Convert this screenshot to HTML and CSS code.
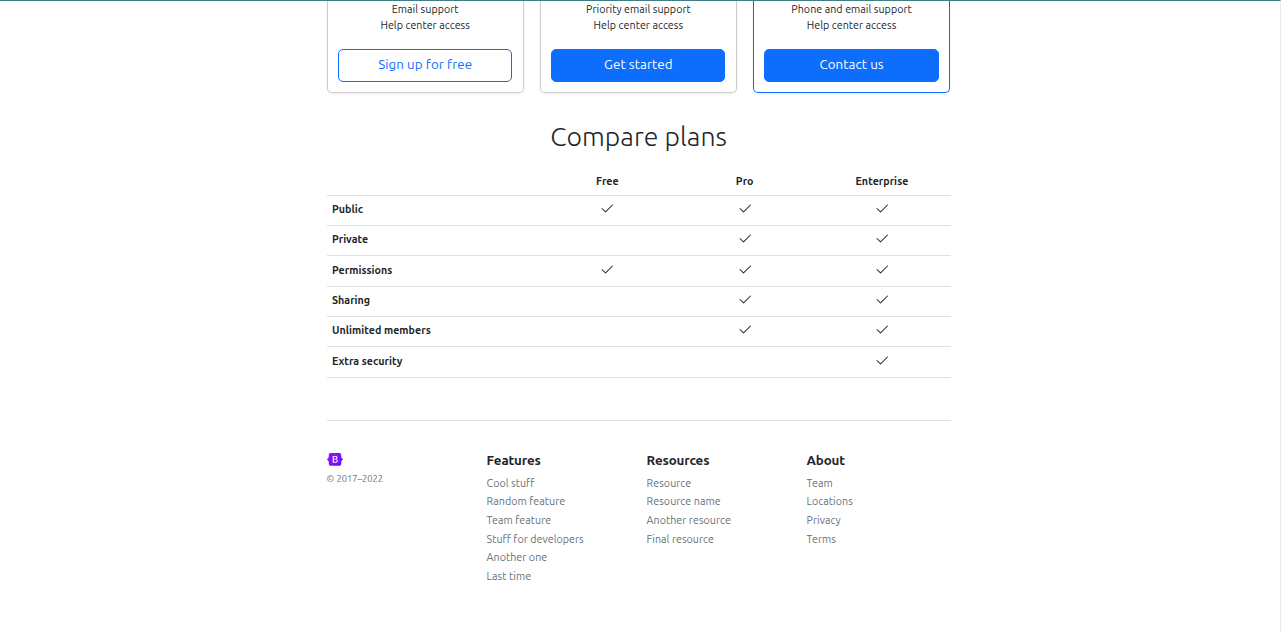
FILE: index.html
```html
<!DOCTYPE html>
<html lang="en">
<head>
<meta charset="utf-8">
<title>Pricing</title>
<link rel="stylesheet" href="styles.css">
</head>
<body>
<svg class="defs" aria-hidden="true">
  <symbol id="check" viewBox="0 0 16 16"><path d="M13.854 3.646a.5.5 0 0 1 0 .708l-7 7a.5.5 0 0 1-.708 0l-3.5-3.5a.5.5 0 1 1 .708-.708L6.5 10.293l6.646-6.647a.5.5 0 0 1 .708 0z"/></symbol>
</svg>
<div class="page">
  <main>
    <div class="cards">
      <section class="card">
        <ul><li>Email support</li><li>Help center access</li></ul>
        <button class="btn outline">Sign up for free</button>
      </section>
      <section class="card">
        <ul><li>Priority email support</li><li>Help center access</li></ul>
        <button class="btn">Get started</button>
      </section>
      <section class="card primary">
        <ul><li>Phone and email support</li><li>Help center access</li></ul>
        <button class="btn">Contact us</button>
      </section>
    </div>
    <h2 class="title">Compare plans</h2>
    <table class="plans">
      <thead><tr><th class="name"></th><th>Free</th><th>Pro</th><th>Enterprise</th></tr></thead>
      <tbody>
        <tr><th class="name">Public</th><td><svg><use href="#check"/></svg></td><td><svg><use href="#check"/></svg></td><td><svg><use href="#check"/></svg></td></tr>
        <tr><th class="name">Private</th><td></td><td><svg><use href="#check"/></svg></td><td><svg><use href="#check"/></svg></td></tr>
        <tr class="tall"><th class="name">Permissions</th><td><svg><use href="#check"/></svg></td><td><svg><use href="#check"/></svg></td><td><svg><use href="#check"/></svg></td></tr>
        <tr><th class="name">Sharing</th><td></td><td><svg><use href="#check"/></svg></td><td><svg><use href="#check"/></svg></td></tr>
        <tr><th class="name">Unlimited members</th><td></td><td><svg><use href="#check"/></svg></td><td><svg><use href="#check"/></svg></td></tr>
        <tr class="tall"><th class="name">Extra security</th><td></td><td></td><td><svg><use href="#check"/></svg></td></tr>
      </tbody>
    </table>
  </main>
  <footer class="footer">
    <div class="brand">
      <svg class="logo" viewBox="0 0 118 94"><defs><linearGradient id="g" x1="0" y1="0" x2="1" y2="1"><stop offset="0" stop-color="#9013fe"/><stop offset="1" stop-color="#6610f2"/></linearGradient></defs><path fill="url(#g)" fill-rule="evenodd" d="M24.509 0c-6.733 0-11.715 5.893-11.492 12.284.214 6.14-.064 14.092-2.066 20.577C8.943 39.365 5.547 43.485 0 44.014v5.972c5.547.529 8.943 4.649 10.951 11.153 2.002 6.485 2.28 14.437 2.066 20.577C12.794 88.106 17.776 94 24.51 94H93.5c6.733 0 11.714-5.893 11.491-12.284-.214-6.14.064-14.092 2.066-20.577 2.009-6.504 5.396-10.624 10.943-11.153v-5.972c-5.547-.529-8.934-4.649-10.943-11.153-2.002-6.484-2.28-14.437-2.066-20.577C105.214 5.894 100.233 0 93.5 0H24.508zM80 57.863C80 66.663 73.436 72 62.543 72H44a2 2 0 01-2-2V24a2 2 0 012-2h18.437c9.083 0 15.044 4.92 15.044 12.474 0 5.302-4.01 10.049-9.119 10.88v.277C75.317 46.394 80 51.21 80 57.863zM60.521 28.34H49.948v14.934h8.905c6.884 0 10.68-2.772 10.68-7.727 0-4.643-3.264-7.207-9.012-7.207zM49.948 49.2v16.458H60.91c7.167 0 10.964-2.876 10.964-8.281 0-5.406-3.903-8.178-11.425-8.178H49.948z"/></svg>
      <small>© 2017–2022</small>
    </div>
    <div><h5>Features</h5><ul><li>Cool stuff</li><li>Random feature</li><li>Team feature</li><li>Stuff for developers</li><li>Another one</li><li>Last time</li></ul></div>
    <div><h5>Resources</h5><ul><li>Resource</li><li>Resource name</li><li>Another resource</li><li>Final resource</li></ul></div>
    <div><h5>About</h5><ul><li>Team</li><li>Locations</li><li>Privacy</li><li>Terms</li></ul></div>
  </footer>
</div>
</body>
</html>
```
FILE: styles.css
```css
* { box-sizing: border-box; }
body {
  margin: 0;
  height: 632px;
  overflow: hidden;
  border-top: 1px solid #3d7f86;
  border-right: 1px solid #ebebeb;
  background: #fff;
  color: #212529;
  font: 10.67px/16px Ubuntu, "Open Sans", "Noto Sans", sans-serif;
  letter-spacing: 0.05px;
}
.defs { display: none; }
ul { list-style: none; margin: 0; padding: 0; }
.page { width: 624px; margin-left: 326.6px; }
.cards { display: grid; grid-template-columns: repeat(3, 197.2px); gap: 16px; height: 92px; }
.card {
  padding: 0 10.5px 10px;
  border: 1px solid #ccc;
  border-top: 0;
  border-radius: 0 0 5px 5px;
  box-shadow: 0 1px 3px rgba(0, 0, 0, .08);
  text-align: center;
}
.card.primary { border-color: #0d6efd; }
.card ul { height: 48px; }
.btn {
  display: block;
  width: 100%;
  height: 33px;
  padding: 0 0 2px;
  border: 1px solid #0d6efd;
  border-radius: 5px;
  background: #0d6efd;
  color: #fff;
  font: 13.33px/20px Ubuntu, "Open Sans", "Noto Sans", sans-serif;
  letter-spacing: 0.08px;
}
.btn.outline { background: #fff; color: #0d6efd; }
.title {
  margin: 27px 0 14px;
  font-size: 26.67px;
  font-weight: 300;
  line-height: 32px;
  text-align: center;
}
.plans { width: 100%; table-layout: fixed; border-collapse: separate; border-spacing: 0; }
.plans th, .plans td { height: 30px; padding: 0 5.33px 4px; border-bottom: 1px solid #dee2e6; text-align: center; vertical-align: middle; }
.plans .tall th, .plans .tall td { height: 31px; padding-bottom: 3px; }
.plans thead th { height: 30px; padding-bottom: 0; }
.plans th.name { width: 34%; text-align: left; }
.plans svg { display: block; width: 16px; height: 16px; margin: 0 auto; fill: #212529; }
.footer {
  display: grid;
  grid-template-columns: repeat(4, 160px);
  margin-top: 42px;
  padding-top: 32px;
  border-top: 1px solid #dee2e6;
}
.logo { display: block; width: 16px; height: 12.67px; margin: 0.33px 0 6px; }
.brand small { display: block; color: #6c757d; font-size: 9.33px; line-height: 14px; letter-spacing: 0; }
.footer h5 { margin: 0 0 5.67px; font-size: 13.33px; font-weight: 600; line-height: 16px; letter-spacing: -0.13px; }
.footer li { height: 18.67px; color: #666f77; }
```
